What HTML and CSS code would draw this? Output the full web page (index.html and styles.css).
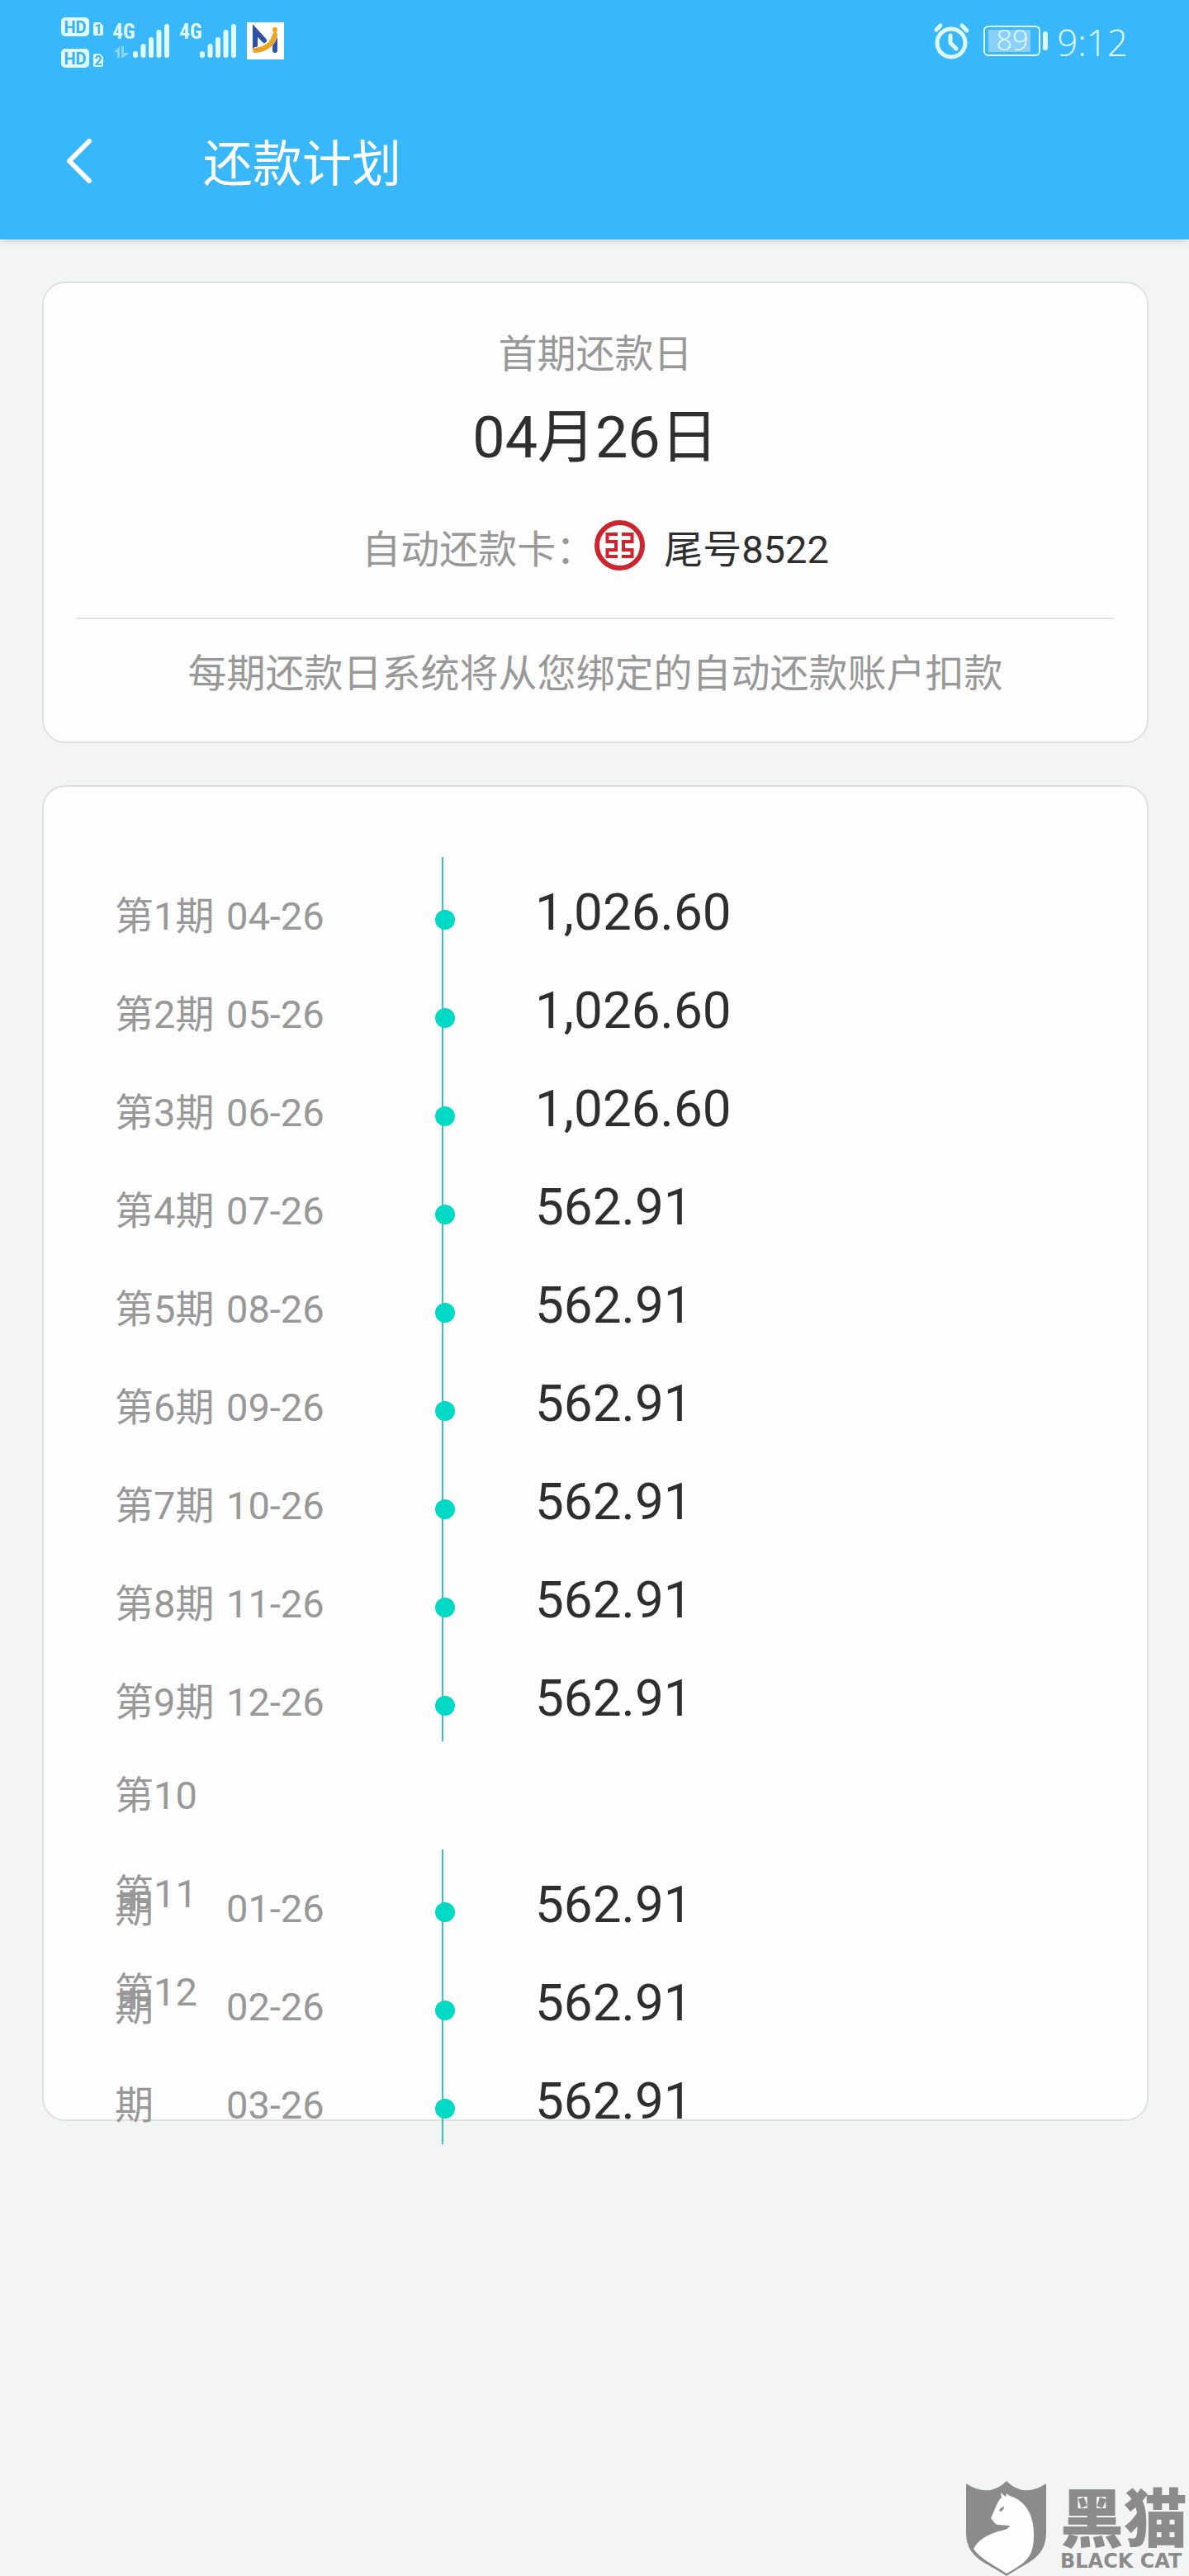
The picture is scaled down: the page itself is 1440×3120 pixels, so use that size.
FILE: index.html
```html
<!DOCTYPE html>
<html lang="zh-CN">
<head>
<meta charset="utf-8">
<meta name="viewport" content="width=device-width, initial-scale=1">
<title>还款计划</title>
<link rel="stylesheet" href="styles.css">
</head>
<body>
<header class="top">
  <div class="status">
    <svg class="status-icons" width="272" height="64" viewBox="73 15 272 64" aria-label="信号">
      <g fill="#e0fbff">
        <rect x="74" y="21" width="34" height="23" rx="5"/>
        <rect x="74" y="59" width="34" height="23" rx="5"/>
        <path d="M115 27h6l4 4v10q0 2-2 2h-8q-2 0-2-2V29q0-2 2-2z"/>
        <path d="M115 65h6l4 4v10q0 2-2 2h-8q-2 0-2-2V67q0-2 2-2z"/>
      </g>
      <g class="hd">
        <text x="91" y="40" text-anchor="middle">HD</text>
        <text x="91" y="78" text-anchor="middle">HD</text>
        <text class="sim" x="119" y="41" text-anchor="middle">1</text>
        <text class="sim" x="119" y="79" text-anchor="middle">2</text>
      </g>
      <g class="net">
        <text x="150" y="47" text-anchor="middle">4G</text>
        <text x="231" y="47" text-anchor="middle">4G</text>
      </g>
      <path d="M138 63l7-7v14h-3v-7zM147 70V56h3v8h7l-8 6z" fill="#8bd5fd"/>
      <g stroke="#e0fbff" stroke-width="6" stroke-linecap="round">
        <path d="M164 65v2M173.500 56v11M183 48v19M192.500 39v28M202 32v35"/>
        <path d="M245 65v2M254.500 56v11M264 48v19M273.500 39v28M283 32v35"/>
      </g>
      <rect x="299" y="27" width="45" height="45" fill="#fff"/>
      <g fill="none" stroke-linecap="round" stroke-width="6">
        <path d="M309 60V37L320 49M333 44V61" stroke="#2f52a5"/>
        <path d="M310 61Q329 58 333 40" stroke="#fff" stroke-width="8"/>
        <path d="M309 61Q329 59 333 42" stroke="#eca321"/>
        <circle cx="333" cy="36" r="3" fill="#eca321" stroke="none"/>
      </g>
    </svg>
    <div class="status-right">
      <svg width="44" height="44" viewBox="0 0 44 44" fill="none" stroke="#e0fbff" stroke-linecap="round" aria-label="闹钟">
        <circle cx="22" cy="24" r="17" stroke-width="5"/>
        <path d="M21 15v9l7 7" stroke-width="5" stroke-linejoin="round"/>
        <path d="M4 8l5-5M35 3l6 6" stroke-width="5"/>
      </svg>
      <svg class="battery" width="78" height="38" viewBox="0 0 78 38" aria-label="电量">
        <rect x="1" y="1" width="67" height="35" rx="5" fill="none" stroke="#e0fbff" stroke-width="2"/>
        <rect x="6" y="5" width="51" height="27" fill="#8bd0fb"/>
        <rect x="72" y="7" width="6" height="23" rx="3" fill="#e0fbff"/>
        <text x="35" y="30" text-anchor="middle">89</text>
      </svg>
      <time class="clock">9:12</time>
    </div>
  </div>
  <div class="titlebar">
    <button class="back" type="button" aria-label="返回">
      <svg width="34" height="56" viewBox="0 0 34 56" fill="none" stroke="#fff" stroke-width="6" stroke-linecap="round" stroke-linejoin="round"><path d="M30 4L6 28L30 52"/></svg>
    </button>
    <h1 class="title">还款计划</h1>
  </div>
</header>
<main class="content">
  <section class="card summary">
    <p class="muted">首期还款日</p>
    <p class="due">04月26日</p>
    <p class="bank">
      <span class="bank-text muted">自动还款卡：</span>
      <svg width="61" height="61" viewBox="0 0 61 61" fill="none" stroke="#cb252d" aria-label="工商银行">
        <circle cx="30.500" cy="30.500" r="27.500" stroke-width="6"/>
        <path d="M28 17H15.500V26H26V36H15.500V44H28M33 17H45.500V26H35V36H45.500V44H33" stroke-width="4"/>
      </svg>
      <span class="bank-text tail">尾号8522</span>
    </p>
    <p class="note muted">每期还款日系统将从您绑定的自动还款账户扣款</p>
  </section>
  <section class="card">
    <ol class="plan">
      <li class="row"><span class="term">第1期</span><span class="date">04-26</span><i class="rail"></i><span class="amount">1,026.60</span></li>
      <li class="row"><span class="term">第2期</span><span class="date">05-26</span><i class="rail"></i><span class="amount">1,026.60</span></li>
      <li class="row"><span class="term">第3期</span><span class="date">06-26</span><i class="rail"></i><span class="amount">1,026.60</span></li>
      <li class="row"><span class="term">第4期</span><span class="date">07-26</span><i class="rail"></i><span class="amount">562.91</span></li>
      <li class="row"><span class="term">第5期</span><span class="date">08-26</span><i class="rail"></i><span class="amount">562.91</span></li>
      <li class="row"><span class="term">第6期</span><span class="date">09-26</span><i class="rail"></i><span class="amount">562.91</span></li>
      <li class="row"><span class="term">第7期</span><span class="date">10-26</span><i class="rail"></i><span class="amount">562.91</span></li>
      <li class="row"><span class="term">第8期</span><span class="date">11-26</span><i class="rail"></i><span class="amount">562.91</span></li>
      <li class="row"><span class="term">第9期</span><span class="date">12-26</span><i class="rail"></i><span class="amount">562.91</span></li>
      <li class="row row-break"><span class="term">第10期</span><span class="date">01-26</span><i class="rail"></i><span class="amount">562.91</span></li>
      <li class="row"><span class="term">第11期</span><span class="date">02-26</span><i class="rail"></i><span class="amount">562.91</span></li>
      <li class="row"><span class="term">第12期</span><span class="date">03-26</span><i class="rail"></i><span class="amount">562.91</span></li>
    </ol>
  </section>
</main>
<div class="watermark">
  <svg width="98" height="115" viewBox="0 0 98 115" aria-hidden="true">
    <path d="M0 3Q28 21 49 0Q70 21 97 3V62C97 94 74 98 49 115C24 98 0 94 0 62Z" fill="#8b8b8b"/>
    <path d="M42 14L48 19L49 15L53 18C73 24 82 42 82 65C82 90 75 98 49 112C30 99 18 95 9 82C18 66 35 62 47 59Q52 57 53 54L39 53C35 53 33 48 30 45L37 29Q40 22 43 20Z" fill="#fcfdfd"/>
    <path d="M40 36q1-4 6-5q0 5-5 6z" fill="#8b8b8b"/>
  </svg>
  <div class="brand"><span class="brand-cn">黑猫</span><span class="brand-en">BLACK CAT</span></div>
</div>
</body>
</html>
```
FILE: styles.css
```css
* { box-sizing: border-box; }
body {
  margin: 0;
  min-height: 100vh;
  display: flex;
  flex-direction: column;
  background: #f3f5f4;
  color: #2e2e2e;
  font-family: Roboto, "Noto Sans CJK SC", sans-serif;
  font-size: 47px;
}
p, h1, ol { margin: 0; padding: 0; font-weight: 400; }
svg { display: block; flex: none; overflow: visible; }

.top {
  background: #39b7fb;
  box-shadow: 0 2px 8px rgba(60, 60, 110, 0.2);
}
.status {
  height: 100px;
  padding: 0 74px 0 73px;
  display: flex;
  align-items: center;
  justify-content: space-between;
}
.status-icons { margin-bottom: 6px; }
.hd { font: 700 20px Roboto, sans-serif; fill: #39b0f0; }
.sim { font-size: 16px; }
.net { font: 700 25px "Liberation Sans Narrow", "Roboto Condensed", Roboto, sans-serif; fill: #e0fbff; }
.status-right { display: flex; align-items: center; gap: 17px; }
.battery text { font: 300 34px "Open Sans", sans-serif; fill: #e0fbff; }
.clock { font: 300 44px/64px "Open Sans", sans-serif; color: #e0fbff; margin: 2px 0 0 -6px; }

.titlebar {
  height: 190px;
  padding: 0 78px;
  display: flex;
}
.back {
  width: 168px;
  padding: 0;
  border: 0;
  background: none;
  display: flex;
  align-items: center;
}
.title { padding-top: 5px; font-size: 60px; line-height: 190px; color: #fff; }

.content { padding: 51px 49px 51px 51px; display: flex; flex-direction: column; gap: 51px; }
.card {
  border: 2px solid #dfe1e0;
  border-radius: 28px;
  background: #fdfdfd;
}
.muted { color: #989898; }
.summary {
  padding: 52px 40px 0;
  text-align: center;
  line-height: 68px;
}
.due { font-size: 70px; line-height: 100px; margin-top: 17px; }
.bank {
  display: flex;
  justify-content: center;
  align-items: flex-start;
  margin-top: 50px;
  padding-bottom: 50px;
  border-bottom: 2px solid #e0e2e1;
}
.bank-text { padding-top: 3px; line-height: 65px; }
.tail { margin-left: 23px; }
.note { padding: 32px 0 48px; }

.plan { list-style: none; padding: 85px 0 0; margin-bottom: -30px; }
.row {
  height: 119px;
  padding-left: 86px;
  display: flex;
  align-items: last baseline;
  line-height: 137px;
}
.row-break { margin-top: 131px; }
.term, .date, .amount { margin-bottom: -21px; flex: none; }
.term, .date { color: #989898; }
.term { width: 135px; }
.date { width: 253px; }
.rail {
  align-self: stretch;
  width: 24px;
  flex: none;
  margin-right: 97px;
  background: linear-gradient(#35c4b8, #35c4b8) 8px 0 / 2px 100% no-repeat;
}
.rail::before {
  content: "";
  display: block;
  width: 24px;
  height: 24px;
  margin-top: 64px;
  border-radius: 50%;
  background: #00d9c5;
}
.amount { font-size: 62px; }

.watermark {
  margin-top: auto;
  align-self: flex-end;
  display: flex;
  align-items: flex-end;
  gap: 16px;
  padding-right: 2px;
  color: #8b8b8b;
}
.brand { display: flex; flex-direction: column; }
.brand-cn { font: 900 77px/76px "Noto Sans CJK SC", sans-serif; }
.brand-en { font: 700 24px/36px "DejaVu Sans", sans-serif; white-space: nowrap; }
```
